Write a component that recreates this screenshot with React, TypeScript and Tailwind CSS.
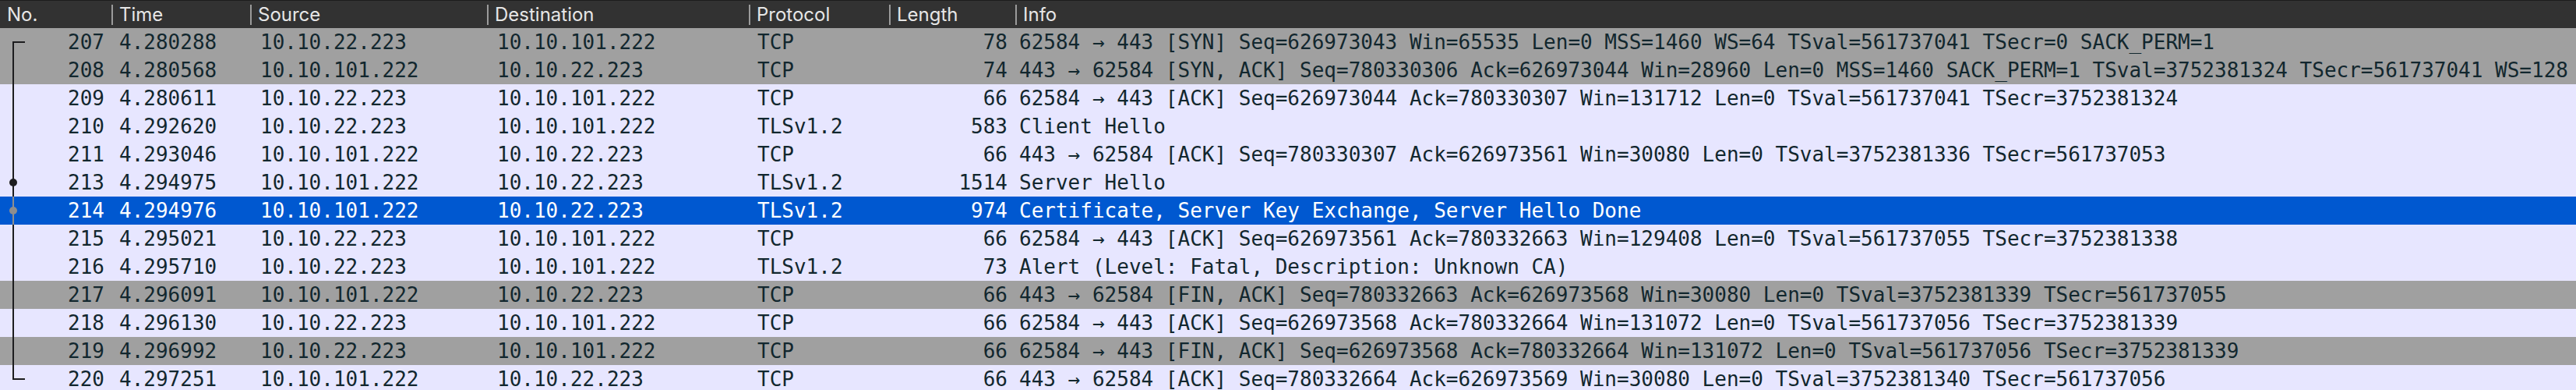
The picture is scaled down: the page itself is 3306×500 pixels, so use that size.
import type { ReactNode } from 'react';

type Tone = 'syn' | 'tcp' | 'sel';
type Mark = 'first' | 'mid' | 'dot' | 'last';

interface Packet {
  no: number;
  time: string;
  src: string;
  dst: string;
  proto: string;
  len: number;
  info: string;
  tone: Tone;
  mark: Mark;
}

const A = '10.10.22.223';
const B = '10.10.101.222';

const PACKETS: Packet[] = [
  { no: 207, time: '4.280288', src: A, dst: B, proto: 'TCP', len: 78, tone: 'syn', mark: 'first', info: '62584 → 443 [SYN] Seq=626973043 Win=65535 Len=0 MSS=1460 WS=64 TSval=561737041 TSecr=0 SACK_PERM=1' },
  { no: 208, time: '4.280568', src: B, dst: A, proto: 'TCP', len: 74, tone: 'syn', mark: 'mid', info: '443 → 62584 [SYN, ACK] Seq=780330306 Ack=626973044 Win=28960 Len=0 MSS=1460 SACK_PERM=1 TSval=3752381324 TSecr=561737041 WS=128' },
  { no: 209, time: '4.280611', src: A, dst: B, proto: 'TCP', len: 66, tone: 'tcp', mark: 'mid', info: '62584 → 443 [ACK] Seq=626973044 Ack=780330307 Win=131712 Len=0 TSval=561737041 TSecr=3752381324' },
  { no: 210, time: '4.292620', src: A, dst: B, proto: 'TLSv1.2', len: 583, tone: 'tcp', mark: 'mid', info: 'Client Hello' },
  { no: 211, time: '4.293046', src: B, dst: A, proto: 'TCP', len: 66, tone: 'tcp', mark: 'mid', info: '443 → 62584 [ACK] Seq=780330307 Ack=626973561 Win=30080 Len=0 TSval=3752381336 TSecr=561737053' },
  { no: 213, time: '4.294975', src: B, dst: A, proto: 'TLSv1.2', len: 1514, tone: 'tcp', mark: 'dot', info: 'Server Hello' },
  { no: 214, time: '4.294976', src: B, dst: A, proto: 'TLSv1.2', len: 974, tone: 'sel', mark: 'dot', info: 'Certificate, Server Key Exchange, Server Hello Done' },
  { no: 215, time: '4.295021', src: A, dst: B, proto: 'TCP', len: 66, tone: 'tcp', mark: 'mid', info: '62584 → 443 [ACK] Seq=626973561 Ack=780332663 Win=129408 Len=0 TSval=561737055 TSecr=3752381338' },
  { no: 216, time: '4.295710', src: A, dst: B, proto: 'TLSv1.2', len: 73, tone: 'tcp', mark: 'mid', info: 'Alert (Level: Fatal, Description: Unknown CA)' },
  { no: 217, time: '4.296091', src: B, dst: A, proto: 'TCP', len: 66, tone: 'syn', mark: 'mid', info: '443 → 62584 [FIN, ACK] Seq=780332663 Ack=626973568 Win=30080 Len=0 TSval=3752381339 TSecr=561737055' },
  { no: 218, time: '4.296130', src: A, dst: B, proto: 'TCP', len: 66, tone: 'tcp', mark: 'mid', info: '62584 → 443 [ACK] Seq=626973568 Ack=780332664 Win=131072 Len=0 TSval=561737056 TSecr=3752381339' },
  { no: 219, time: '4.296992', src: A, dst: B, proto: 'TCP', len: 66, tone: 'syn', mark: 'mid', info: '62584 → 443 [FIN, ACK] Seq=626973568 Ack=780332664 Win=131072 Len=0 TSval=561737056 TSecr=3752381339' },
  { no: 220, time: '4.297251', src: B, dst: A, proto: 'TCP', len: 66, tone: 'tcp', mark: 'last', info: '443 → 62584 [ACK] Seq=780332664 Ack=626973569 Win=30080 Len=0 TSval=3752381340 TSecr=561737056' },
];

const TONE = {
  syn: 'bg-[#a0a0a0] text-[#12272e]',
  tcp: 'bg-[#e7e6ff] text-[#12272e]',
  sel: 'bg-[#0058d0] text-white',
} as const;

// conversation bracket drawn at the left of the No. column
function RelMark({ mark, selected }: { mark: Mark; selected: boolean }) {
  const c = selected ? '#8e8e8e' : '#1d1d1f';
  const y1 = mark === 'first' ? 18 : 0;
  const y2 = mark === 'last' ? 18 : 36;
  return (
    <svg width="34" height="36" viewBox="0 0 34 36" className="shrink-0">
      <line x1="17" y1={y1} x2="17" y2={y2} stroke={c} strokeWidth="2" />
      {(mark === 'first' || mark === 'last') && (
        <line x1="16" y1="18" x2="32" y2="18" stroke={c} strokeWidth="2" />
      )}
      {mark === 'dot' && <circle cx="17" cy="18" r="5" fill={c} />}
    </svg>
  );
}

function HeadCell({ w, label, sep = true }: { w: string; label: string; sep?: boolean }) {
  return (
    <div className={`${w} flex items-center h-full shrink-0`}>
      {sep && <div className="w-[2px] h-[26px] bg-[#9b9b9b]" />}
      <span className={sep ? 'ml-2' : 'ml-[9px]'}>{label}</span>
    </div>
  );
}

function Cell({ className, children }: { className: string; children: ReactNode }) {
  return <div className={`${className} shrink-0 overflow-hidden whitespace-pre`}>{children}</div>;
}

export default function App() {
  return (
    <div className="w-[3306px] h-[500px] overflow-hidden bg-[#e7e6ff]">
      <div className="h-9 flex border-t border-[#1c1c1c] bg-[#323232] text-[#e6e6e6] font-['Inter',sans-serif] text-[24px]">
        <HeadCell w="w-[143px]" label="No." sep={false} />
        <HeadCell w="w-[178px]" label="Time" />
        <HeadCell w="w-[304px]" label="Source" />
        <HeadCell w="w-[336px]" label="Destination" />
        <HeadCell w="w-[180px]" label="Protocol" />
        <HeadCell w="w-[162px]" label="Length" />
        <HeadCell w="flex-1" label="Info" />
      </div>
      <div className="font-['DejaVu_Sans_Mono',monospace] text-[26px] leading-[36px]">
        {PACKETS.map((p) => (
          <div key={p.no} className={`h-9 flex ${TONE[p.tone]}`}>
            <div className="w-[143px] shrink-0 flex pr-[9px]">
              <RelMark mark={p.mark} selected={p.tone === 'sel'} />
              <span className="ml-auto">{p.no}</span>
            </div>
            <Cell className="w-[178px] pl-[10px]">{p.time}</Cell>
            <Cell className="w-[304px] pl-[13px]">{p.src}</Cell>
            <Cell className="w-[336px] pl-[13px]">{p.dst}</Cell>
            <Cell className="w-[180px] pl-[11px]">{p.proto}</Cell>
            <Cell className="w-[162px] pr-[10px] text-right">{p.len}</Cell>
            <Cell className="flex-1 pl-[5px]">{p.info}</Cell>
          </div>
        ))}
      </div>
    </div>
  );
}
